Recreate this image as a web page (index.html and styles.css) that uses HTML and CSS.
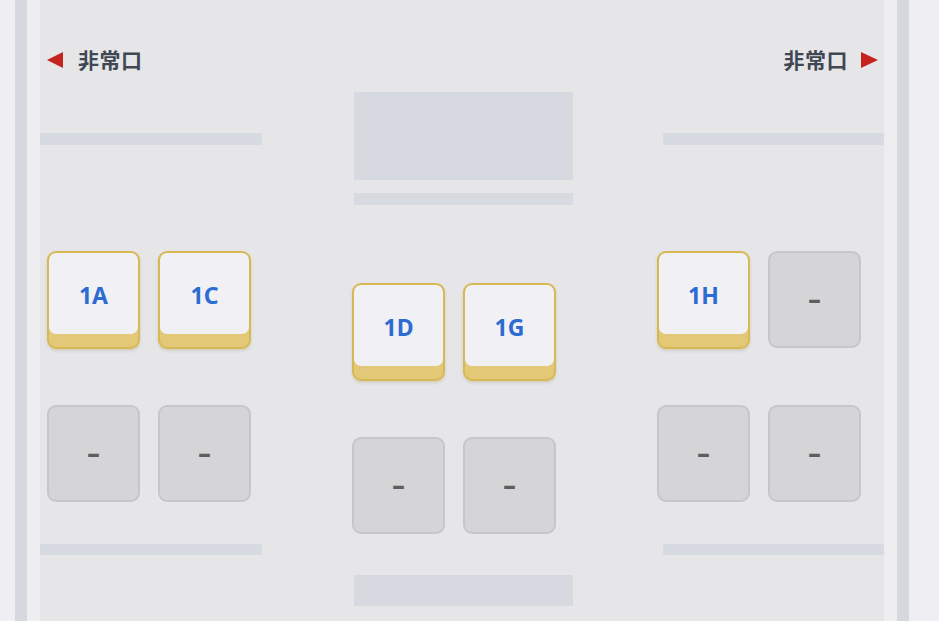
FILE: index.html
```html
<!doctype html>
<html lang="ja">
<head>
  <meta charset="utf-8">
  <title>座席表</title>
  <link rel="stylesheet" href="styles.css">
</head>
<body>
  <div class="plane">
    <div class="outside"></div>
    <div class="wall"></div>
    <div class="strip"></div>

    <div class="cabin">
      <div class="side side_lft">
        <div class="exit exit_lft">
          <span class="arrow arrow_lft"></span>
          <span class="exit_txt">非常口</span>
        </div>
        <div class="bar"></div>
        <div class="seats">
          <div class="seat seat_ok">1A</div>
          <div class="seat seat_ok">1C</div>
          <div class="seat seat_na">–</div>
          <div class="seat seat_na">–</div>
        </div>
        <div class="bar bar_btm"></div>
      </div>

      <div class="side side_cntr">
        <div class="block"></div>
        <div class="bar bar_thin"></div>
        <div class="seats">
          <div class="seat seat_ok">1D</div>
          <div class="seat seat_ok">1G</div>
          <div class="seat seat_na">–</div>
          <div class="seat seat_na">–</div>
        </div>
        <div class="block block_btm"></div>
      </div>

      <div class="side side_rght">
        <div class="exit exit_rght">
          <span class="exit_txt">非常口</span>
          <span class="arrow arrow_rght"></span>
        </div>
        <div class="bar"></div>
        <div class="seats">
          <div class="seat seat_ok">1H</div>
          <div class="seat seat_na">–</div>
          <div class="seat seat_na">–</div>
          <div class="seat seat_na">–</div>
        </div>
        <div class="bar bar_btm"></div>
      </div>
    </div>

    <div class="strip"></div>
    <div class="wall"></div>
    <div class="outside"></div>
  </div>
</body>
</html>
```

FILE: styles.css
```css
html, body {
  margin: 0;
  height: 100%;
  overflow: hidden;
  background: #efeef2;
}

.plane {
  display: flex;
  height: 621px;
}

.outside {
  width: 15px;
  background: #efeef2;
}

.outside:last-child {
  flex: 1;
}

.wall {
  width: 12px;
  background: #d5d8df;
}

.strip {
  width: 13px;
  background: #eeeef1;
}

.cabin {
  width: 844px;
  display: flex;
  background: #e6e6e9;
  overflow: hidden;
}

.side {
  display: flex;
  flex-direction: column;
}

.side_lft {
  width: 222px;
}

.side_cntr {
  width: 219px;
  margin-left: 92px;
}

.side_rght {
  width: 221px;
  margin-left: 90px;
}

/* emergency exit labels */
.exit {
  display: flex;
  align-items: center;
  height: 20px;
  margin-top: 49px;
  font-family: "Noto Sans CJK JP", "Noto Sans", sans-serif;
  font-weight: 700;
  font-size: 21px;
  color: #414653;
}

.exit_lft {
  margin-left: 7px;
  gap: 15px;
}

.exit_rght {
  justify-content: flex-end;
  margin-right: 6px;
  gap: 13px;
}

.exit_txt {
  line-height: 20px;
  letter-spacing: 0.5px;
}

.arrow {
  width: 0;
  height: 0;
  margin-top: 1px;
  border-top: 8px solid transparent;
  border-bottom: 8px solid transparent;
}

.arrow_lft {
  border-right: 16px solid #c4231e;
}

.arrow_rght {
  border-left: 17px solid #c4231e;
}

/* fixtures */
.bar {
  height: 12px;
  margin-top: 64px;
  background: #d7dae0;
}

.bar_btm {
  height: 11px;
  margin-top: 42px;
}

.block {
  height: 88px;
  margin-top: 92px;
  background: #d6d9e0;
}

.bar_thin {
  margin-top: 13px;
}

.block_btm {
  height: 31px;
  margin-top: 41px;
}

/* seats */
.seats {
  display: grid;
  grid-template-columns: 93px 93px;
  grid-template-rows: 98px 97px;
  column-gap: 18px;
  row-gap: 56px;
  margin-top: 106px;
  margin-left: 7px;
}

.side_cntr .seats {
  margin-top: 78px;
  margin-left: -2px;
}

.side_rght .seats {
  margin-left: -6px;
}

.seat {
  box-sizing: border-box;
  display: flex;
  align-items: center;
  justify-content: center;
  font-family: "Noto Sans", "Open Sans", sans-serif;
  font-weight: 700;
}

.seat_ok {
  height: 98px;
  padding-top: 3px;
  padding-bottom: 13px;
  border: 2px solid #d6b955;
  border-radius: 9px;
  background: linear-gradient(#f1f0f4 0, #f1f0f4 82px, #ecd894 83px, #dcc06c 100%);
  box-shadow: inset 0 -13px 0 #e2c877, 0 2px 3px rgba(160, 140, 80, 0.25);
  font-size: 23px;
  color: #2c6cd2;
}

.seat_na {
  height: 97px;
  border: 2px solid #c7c6ca;
  border-radius: 9px;
  background: #d5d4d7;
  font-family: "DejaVu Sans", sans-serif;
  font-size: 27px;
  color: #5e5d61;
}
```
